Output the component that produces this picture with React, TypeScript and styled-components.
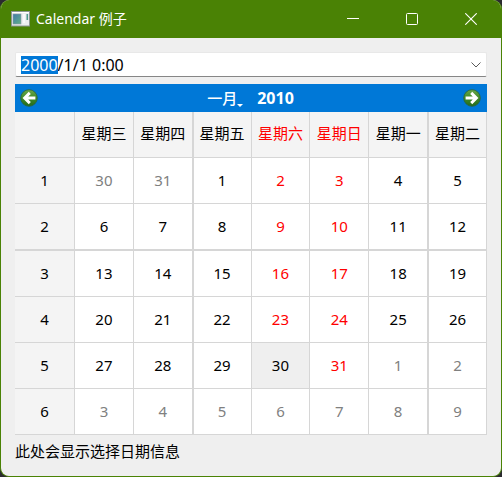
import React, { useEffect, useRef, useState } from "react";
import styled, { createGlobalStyle } from "styled-components";

type Tone = "normal" | "weekend" | "muted";

const line = "#d6d6d6";
const accent = "#0078d7";
const frame = "#4a8205";

const toneColor: Record<Tone, string> = {
  normal: "#000000",
  weekend: "#ff0000",
  muted: "#808080",
};

const GlobalStyle = createGlobalStyle`
  * { box-sizing: border-box; }
  body {
    margin: 0;
    background: #2b2b2f;
    font-family: "Noto Sans", "Noto Sans CJK SC", sans-serif;
    font-size: 15px;
    line-height: 20px;
    color: #000;
  }
  button, input { font: inherit; color: inherit; margin: 0; }
  button { border: 0; padding: 0; background: none; }
`;

const Window = styled.div`
  display: flex;
  flex-direction: column;
  min-height: 100vh;
  border: 1px solid ${frame};
  border-top: 0;
  border-radius: 9px;
  overflow: hidden;
  background: #efefef;
`;

const TitleBar = styled.header`
  display: flex;
  align-items: center;
  gap: 6px;
  height: 38px;
  padding-left: 10px;
  background: ${frame};
  color: #fff;
`;

const Title = styled.h1`
  flex: 1;
  margin: 0;
  font-size: 14px;
  font-weight: 400;
`;

const WindowControls = styled.div`
  display: flex;
  height: 100%;
  padding-right: 1px;
`;

const WindowButton = styled.button`
  display: grid;
  place-items: center;
  width: 59px;
  height: 100%;
`;

const Content = styled.main`
  display: flex;
  flex-direction: column;
  padding: 14px 14px 0;
`;

const DateField = styled.label`
  display: flex;
  align-items: center;
  height: 25px;
  margin-bottom: 7px;
  padding: 0 5px;
  background: #fff;
  border: 1px solid #e8e8e8;
  border-bottom-color: #868686;
  border-radius: 2px;
`;

const DateInput = styled.input`
  flex: 1;
  min-width: 0;
  height: 18px;
  padding: 0;
  border: 0;
  outline: 0;
  font-size: 16px;
  background: transparent;
  &::selection { background: ${accent}; color: #fff; }
`;

const DropButton = styled.button`
  display: grid;
  place-items: center;
  height: 20px;
`;

const MonthBar = styled.nav`
  display: flex;
  align-items: center;
  justify-content: space-between;
  height: 28px;
  padding: 0 6px 0 5px;
  background: ${accent};
  color: #fff;
`;

const Period = styled.div`
  display: flex;
  align-items: center;
  gap: 14px;
  font-weight: 700;
`;

const MonthButton = styled.button`
  display: flex;
  align-items: flex-end;
  font-weight: 500;
`;

const YearButton = styled.button`
  font-size: 16px;
`;

const ArrowButton = styled.button`
  display: grid;
  place-items: center;
`;

const Calendar = styled.table`
  width: 100%;
  table-layout: fixed;
  border-collapse: separate;
  border-spacing: 0;
  background: #fff;
`;

const Row = styled.tr<{ $divided?: boolean }>`
  & > * {
    border-top: ${(p) => (p.$divided ? `1px solid ${line}` : "0")};
  }
`;

const HeadCell = styled.th<{ $tone?: Tone; $divided?: boolean; $first?: boolean }>`
  width: ${(p) => (p.$first ? "60px" : "auto")};
  height: 46px;
  padding: 0 0 4px;
  background: #f4f4f4;
  color: ${(p) => toneColor[p.$tone ?? "normal"]};
  font-weight: 400;
  white-space: nowrap;
  border-right: 1px solid ${line};
  border-bottom: 1px solid ${line};
  border-left: ${(p) => (p.$divided ? `1px solid ${line}` : "0")};
`;

const WeekCell = styled(HeadCell)`
  padding-bottom: 2px;
`;

const DayCell = styled.td<{ $divided?: boolean }>`
  height: 46px;
  padding: 0;
  border-right: 1px solid ${line};
  border-bottom: 1px solid ${line};
  border-left: ${(p) => (p.$divided ? `1px solid ${line}` : "0")};
`;

const DayButton = styled.button<{ $tone: Tone; $marked: boolean }>`
  display: block;
  width: 100%;
  height: 45px;
  padding-bottom: 2px;
  color: ${(p) => toneColor[p.$tone]};
  background: ${(p) => (p.$marked ? "#efefef" : "transparent")};
`;

const Message = styled.p`
  margin: 6px 0 0;
`;

const weekdays = ["星期三", "星期四", "星期五", "星期六", "星期日", "星期一", "星期二"];
const isWeekend = (column: number) => column === 3 || column === 4;
const isDivided = (column: number) => column === 2 || column === 6;

const weeks = Array.from({ length: 6 }, (_, week) =>
  Array.from({ length: 7 }, (_, column) => {
    const date = new Date(2009, 11, 30 + week * 7 + column);
    const inMonth = date.getMonth() === 0;
    const marked = inMonth && date.getDate() === 30;
    const tone: Tone = !inMonth ? "muted" : isWeekend(column) && !marked ? "weekend" : "normal";
    return { day: date.getDate(), marked, tone, key: date.toDateString() };
  })
);

const AppIcon = () => (
  <svg width="19" height="16" viewBox="0 0 19 16" aria-hidden="true">
    <defs>
      <linearGradient id="pane" x1="0" y1="0" x2="1" y2="1">
        <stop offset="0" stopColor="#417aa8" />
        <stop offset="1" stopColor="#62b08a" />
      </linearGradient>
    </defs>
    <rect x="0.5" y="0.5" width="18" height="14.5" fill="#eceef0" stroke="#8d9694" />
    <path d="M1 1.5h17" stroke="#fff" />
    <rect x="2" y="3" width="8" height="10" fill="url(#pane)" stroke="#8c9aa5" strokeWidth="0.6" />
    <path d="M12 3h2v9h-2z" fill="#f8f9fb" />
    <rect x="15.5" y="3" width="1.6" height="6" fill="#4e9a8c" />
  </svg>
);

const RoundArrow = ({ forward }: { forward?: boolean }) => (
  <svg width="18" height="18" viewBox="0 0 18 18" aria-hidden="true">
    <defs>
      <linearGradient id={forward ? "ballNext" : "ballPrev"} x1="0" y1="0" x2="0" y2="1">
        <stop offset="0" stopColor="#6aa84a" />
        <stop offset="0.5" stopColor="#3f8a28" />
        <stop offset="1" stopColor="#246b1c" />
      </linearGradient>
    </defs>
    <circle
      cx="9"
      cy="9"
      r="8.3"
      fill={`url(#${forward ? "ballNext" : "ballPrev"})`}
      stroke="#2c6535"
      strokeWidth="0.8"
    />
    <path
      d={forward ? "M2.6 9h10M8.2 3.9L13.4 9l-5.2 5.1" : "M15.4 9h-10M9.8 3.9L4.6 9l5.2 5.1"}
      fill="none"
      stroke="#fff"
      strokeWidth="2.9"
    />
  </svg>
);

export default function App() {
  const field = useRef<HTMLInputElement>(null);
  const [value, setValue] = useState("2000/1/1 0:00");

  useEffect(() => {
    field.current?.focus();
    field.current?.setSelectionRange(0, 4);
  }, []);

  return (
    <>
      <GlobalStyle />
      <Window>
        <TitleBar>
          <AppIcon />
          <Title>Calendar 例子</Title>
          <WindowControls>
            <WindowButton aria-label="最小化">
              <svg width="12" height="12" viewBox="0 0 12 12" stroke="#fff">
                <path d="M0 5.5h12" />
              </svg>
            </WindowButton>
            <WindowButton aria-label="最大化">
              <svg width="12" height="12" viewBox="0 0 12 12" fill="none" stroke="#fff">
                <rect x="0.5" y="0.5" width="11" height="11" rx="1" />
              </svg>
            </WindowButton>
            <WindowButton aria-label="关闭">
              <svg width="12" height="12" viewBox="0 0 12 12" stroke="#fff" strokeWidth="1.1">
                <path d="M0.3 0.3l11.4 11.4M11.7 0.3L0.3 11.7" />
              </svg>
            </WindowButton>
          </WindowControls>
        </TitleBar>
        <Content>
          <DateField>
            <DateInput
              ref={field}
              aria-label="日期时间"
              value={value}
              onChange={(e) => setValue(e.target.value)}
            />
            <DropButton type="button" aria-label="展开">
              <svg width="10" height="6" viewBox="0 0 10 6" fill="none" stroke="#5a5a5a">
                <path d="M0.5 0.5L5 5l4.5-4.5" />
              </svg>
            </DropButton>
          </DateField>
          <MonthBar>
            <ArrowButton aria-label="上个月">
              <RoundArrow />
            </ArrowButton>
            <Period>
              <MonthButton>
                一月
                <svg width="6" height="4" viewBox="0 0 6 4" fill="#fff" aria-hidden="true">
                  <path d="M0 0h6L3 3z" />
                </svg>
              </MonthButton>
              <YearButton>2010</YearButton>
            </Period>
            <ArrowButton aria-label="下个月">
              <RoundArrow forward />
            </ArrowButton>
          </MonthBar>
          <Calendar>
            <thead>
              <Row>
                <HeadCell $first />
                {weekdays.map((name, column) => (
                  <HeadCell
                    key={name}
                    scope="col"
                    $tone={isWeekend(column) ? "weekend" : "normal"}
                    $divided={isDivided(column)}
                  >
                    {name}
                  </HeadCell>
                ))}
              </Row>
            </thead>
            <tbody>
              {weeks.map((days, week) => (
                <Row key={week} $divided={week === 2}>
                  <WeekCell scope="row">{week + 1}</WeekCell>
                  {days.map((d, column) => (
                    <DayCell key={d.key} $divided={isDivided(column)}>
                      <DayButton $tone={d.tone} $marked={d.marked}>
                        {d.day}
                      </DayButton>
                    </DayCell>
                  ))}
                </Row>
              ))}
            </tbody>
          </Calendar>
          <Message>此处会显示选择日期信息</Message>
        </Content>
      </Window>
    </>
  );
}
